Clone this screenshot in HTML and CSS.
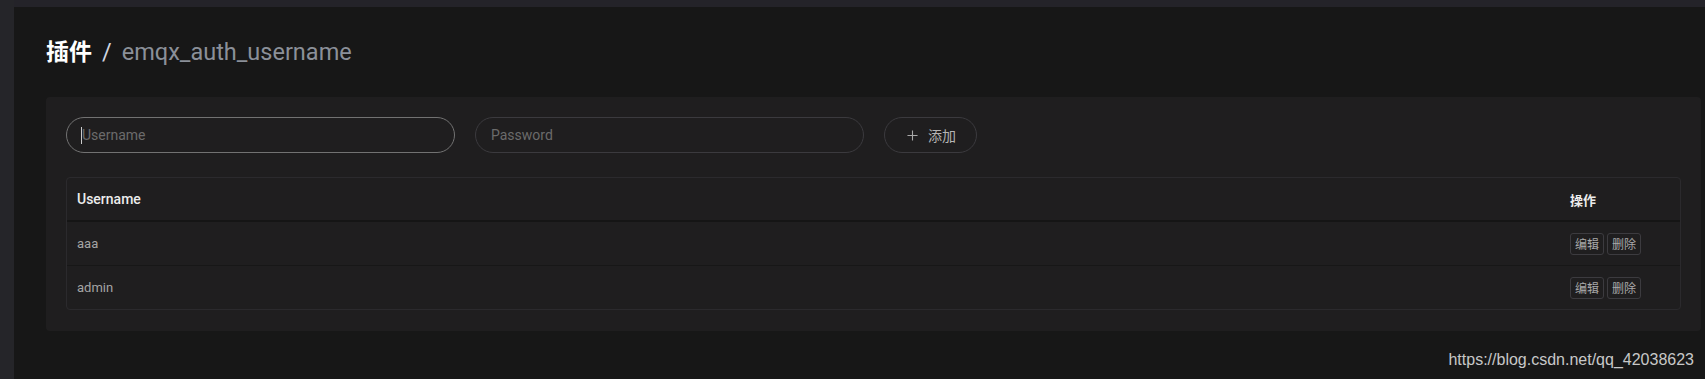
FILE: index.html
```html
<!DOCTYPE html>
<html lang="zh">
<head>
<meta charset="utf-8">
<link rel="stylesheet" href="styles.css">
</head>
<body>
<div class="app">
  <aside class="sidebar"></aside>
  <div class="main">
    <div class="topbar"></div>
    <div class="content">
      <h1 class="title"><span class="crumb">插件</span><span class="sep">/</span><span class="sub">emqx_auth_username</span></h1>
      <section class="card">
        <div class="form">
          <div class="input focused"><span class="caret"></span><span class="ph">Username</span></div>
          <div class="input"><span class="ph">Password</span></div>
          <button class="add"><svg class="plus" viewBox="0 0 12 12" width="12" height="12"><path d="M6 0.5V11.5M0.5 6H11.5" stroke="#a8a8a8" stroke-width="1.2" fill="none"/></svg><span>添加</span></button>
        </div>
        <div class="table">
          <div class="row head">
            <div class="cell name">Username</div>
            <div class="cell ops">操作</div>
          </div>
          <div class="row">
            <div class="cell name">aaa</div>
            <div class="cell ops"><span class="btn">编辑</span><span class="btn">删除</span></div>
          </div>
          <div class="row last">
            <div class="cell name">admin</div>
            <div class="cell ops"><span class="btn">编辑</span><span class="btn">删除</span></div>
          </div>
        </div>
      </section>
    </div>
  </div>
</div>
<div class="watermark">https://blog.csdn.net/qq_42038623</div>
</body>
</html>
```
FILE: styles.css
```css
html, body {
  margin: 0;
  padding: 0;
  height: 100%;
  background: #171717;
  font-family: Roboto, "Noto Sans CJK SC", sans-serif;
  overflow: hidden;
}
.app {
  display: flex;
  height: 379px;
}
.sidebar {
  width: 14px;
  flex: none;
  background: #252529;
}
.main {
  flex: 1;
  display: flex;
  flex-direction: column;
}
.topbar {
  height: 7px;
  background: #242329;
}
.content {
  padding: 0 5px 0 32px;
}
.title {
  margin: 0;
  padding-top: 29px;
  padding-bottom: 29px;
  height: 32px;
  font-size: 23.5px;
  line-height: 32px;
  font-weight: normal;
  display: flex;
  align-items: baseline;
}
.crumb {
  font-weight: bold;
  color: #ffffff;
  font-size: 23px;
}
.sep {
  color: #d0d6e0;
  margin: 0 10px 0 10px;
}
.sub {
  color: #8b9099;
  font-weight: normal;
}
.card {
  background: #1f1e1f;
  border-radius: 4px;
  padding: 20px 20px 21px;
  box-sizing: border-box;
}
.form {
  display: flex;
  gap: 20px;
  height: 36px;
  margin-bottom: 24px;
}
.input {
  width: 389px;
  height: 36px;
  box-sizing: border-box;
  border: 1px solid #3b3a3e;
  border-radius: 18px;
  display: flex;
  align-items: center;
  padding-left: 15px;
  font-size: 14px;
}
.input.focused {
  border-color: #727272;
}
.caret {
  width: 1px;
  height: 17px;
  background: #cccccc;
  margin-left: -1px;
}
.ph {
  color: #6b6b6b;
}
.add {
  width: 93px;
  height: 36px;
  box-sizing: border-box;
  background: transparent;
  border: 1px solid #3b3a3e;
  border-radius: 18px;
  display: flex;
  align-items: center;
  justify-content: center;
  gap: 10px;
  padding: 0 0 0 2px;
  color: #b4b4b4;
  font-family: "Noto Sans CJK SC", sans-serif;
  font-size: 14px;
}
.plus {
  width: 11px;
  height: 11px;
}
.table {
  border: 1px solid #2b2a2d;
  border-radius: 4px;
  width: 1615px;
  box-sizing: border-box;
}
.row {
  display: flex;
  height: 44px;
  align-items: center;
  border-bottom: 1px solid #171717;
  box-sizing: border-box;
}
.row.head {
  border-bottom: 2px solid #151515;
}
.row.last {
  border-bottom: none;
  height: 43px;
}
.cell {
  padding: 0 10px;
  font-size: 13px;
}
.name {
  flex: 1;
  color: #a4a4a4;
}
.ops {
  width: 120px;
  box-sizing: border-box;
  display: flex;
  gap: 3px;
}
.head .cell {
  color: #ececec;
  font-weight: 500;
  font-size: 14px;
}
.head .ops {
  font-family: "Noto Sans CJK SC", sans-serif;
  font-weight: bold;
  font-size: 13px;
}
.btn {
  width: 34px;
  height: 22px;
  box-sizing: border-box;
  border: 1px solid #3c3b3f;
  border-radius: 3px;
  display: flex;
  align-items: center;
  justify-content: center;
  color: #a9a9a9;
  font-size: 12px;
  font-family: "Noto Sans CJK SC", sans-serif;
}
.watermark {
  position: absolute;
  right: 11px;
  bottom: 10px;
  font-family: "Liberation Sans", Arial, sans-serif;
  font-size: 16px;
  color: #c8c8c8;
}
```
